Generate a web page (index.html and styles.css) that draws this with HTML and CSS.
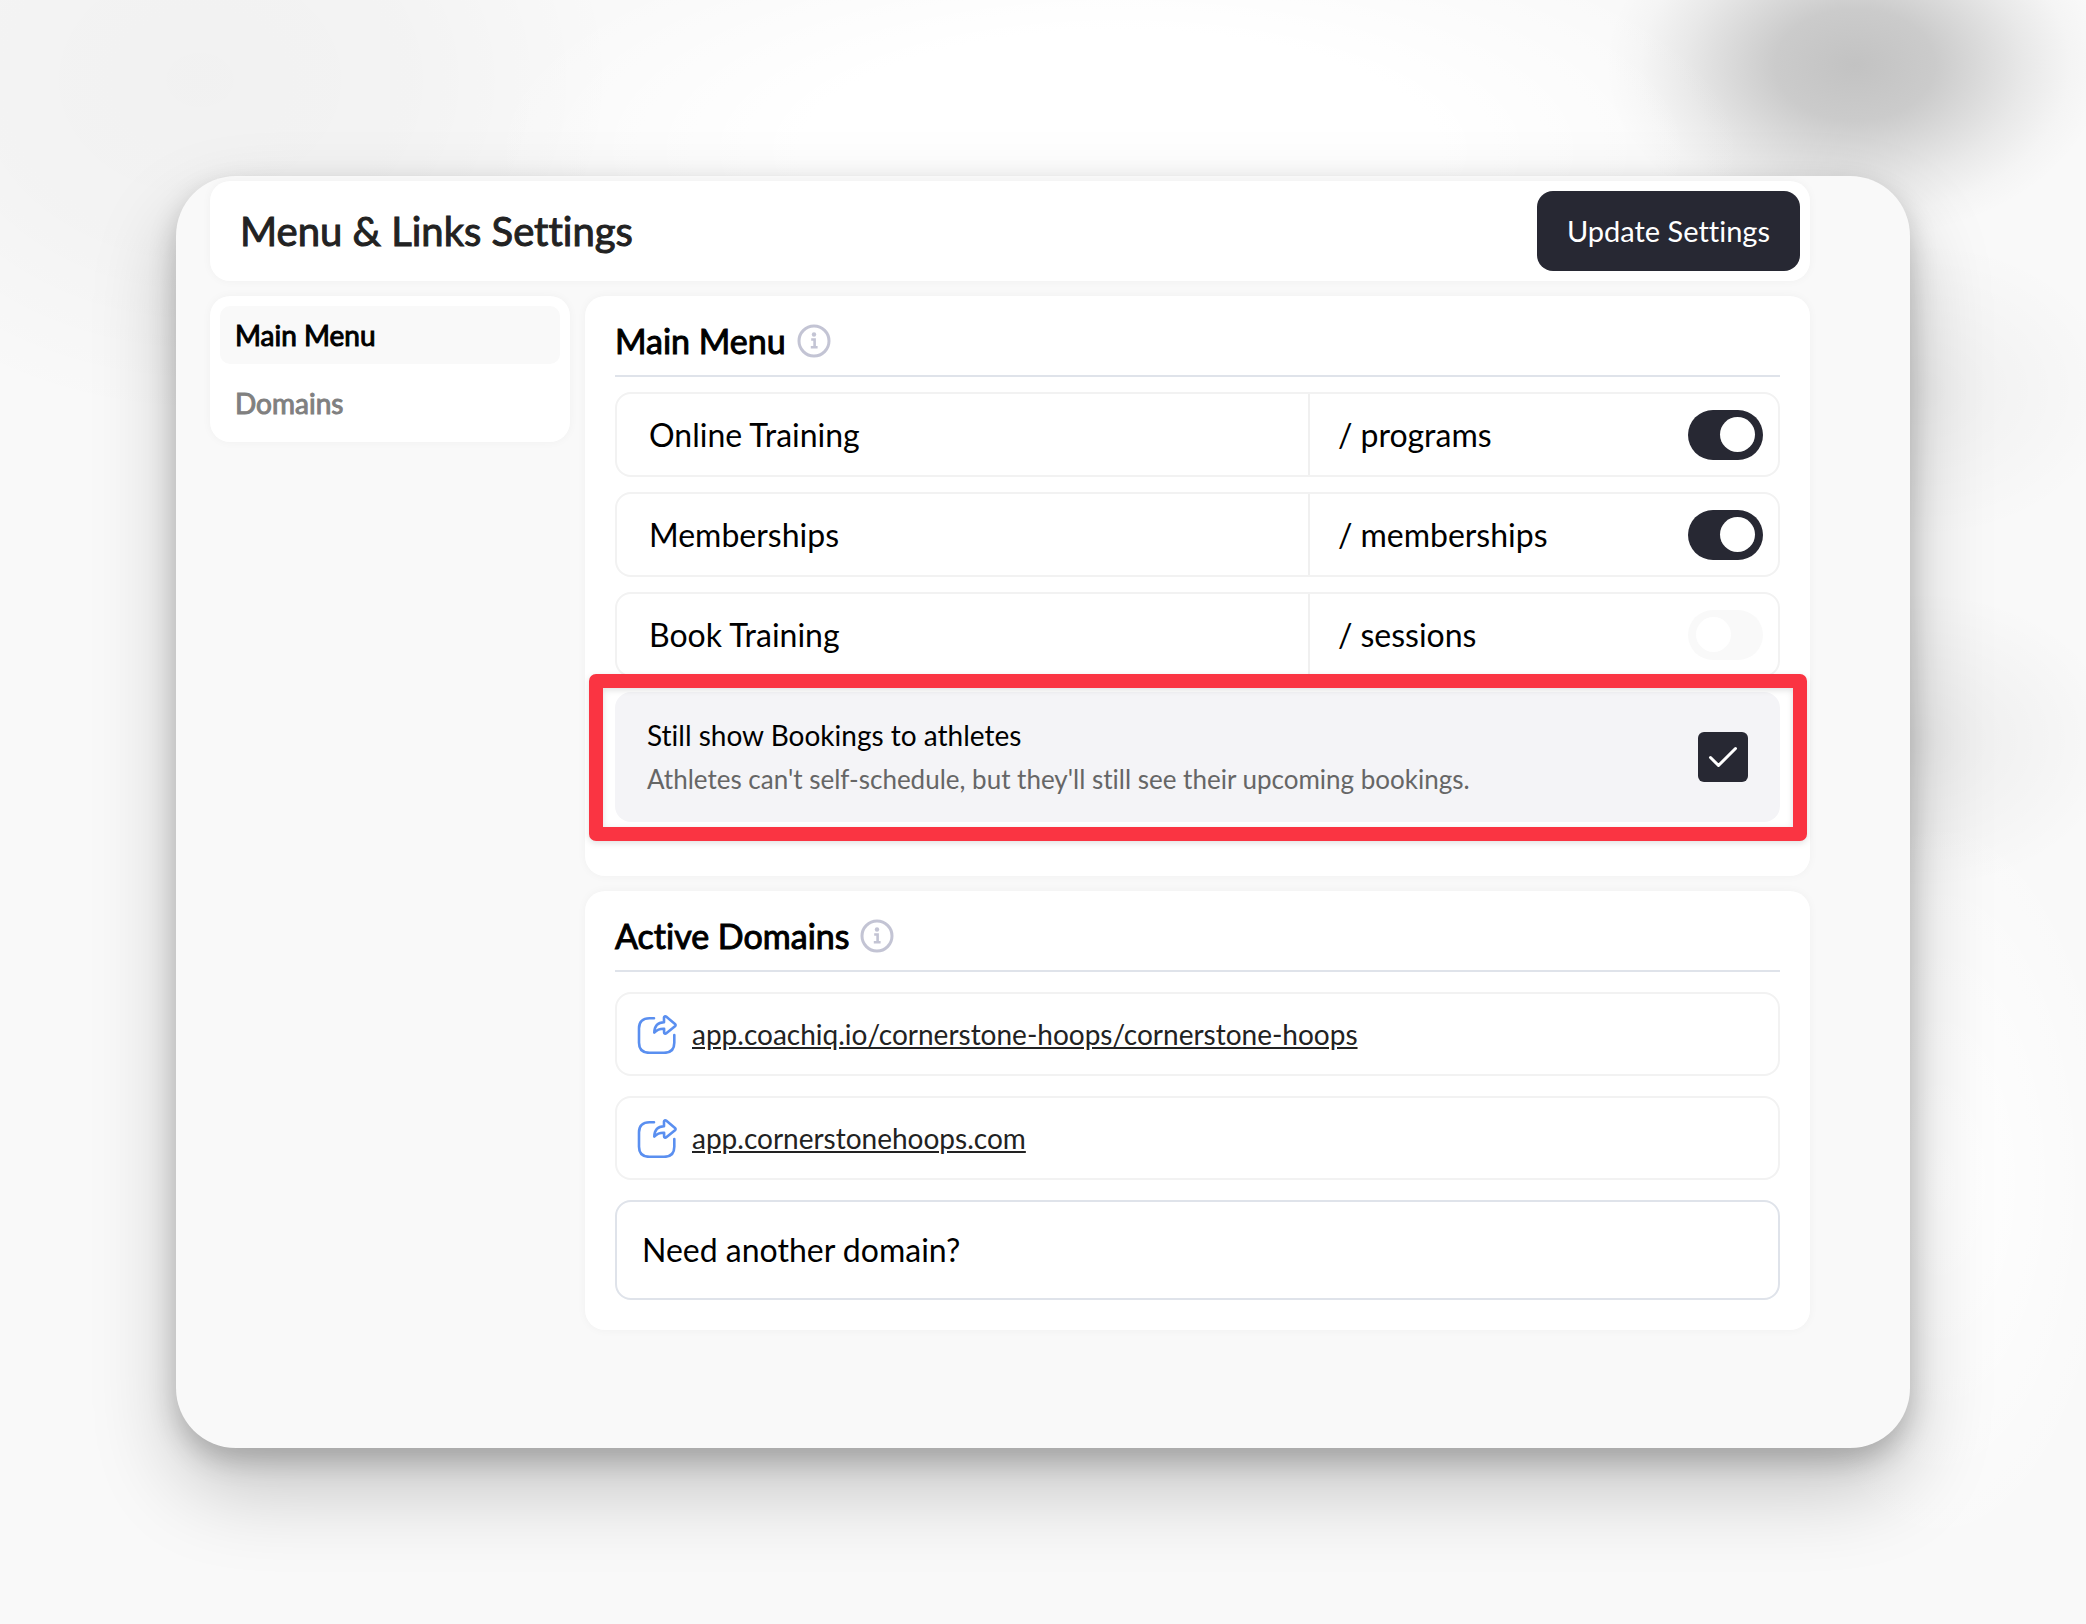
FILE: index.html
```html
<!DOCTYPE html>
<html lang="en">
<head>
<meta charset="utf-8">
<title>Menu &amp; Links Settings</title>
<link rel="stylesheet" href="styles.css">
</head>
<body>
<svg class="sprite" aria-hidden="true">
  <symbol id="info" viewBox="0 0 34 34">
    <circle cx="17" cy="17" r="15" fill="none" stroke="currentColor" stroke-width="3"/>
    <circle cx="17" cy="10.500" r="2.200" fill="currentColor"/>
    <path d="M14.200 15.500h3.400v7M13.800 23.200h6.800" fill="none" stroke="currentColor" stroke-width="2.600"/>
  </symbol>
  <symbol id="share" viewBox="0 0 40 40">
    <g fill="none" stroke="currentColor" stroke-width="2.600" stroke-linecap="round" stroke-linejoin="round">
      <path d="M17 4.300h-4.500C5.500 4.300 2 7.800 2 14.300v14.500c0 6.500 3.500 10 10.500 10h14.500c7 0 10.300-3.500 10.300-10V21"/>
      <path d="M17.300 18.500C17.500 11.500 21 8.500 27 8.300V3.600c0-1.200 1.200-1.700 2.100-1L38 9.900c.8.700.8 1.600 0 2.300l-8.700 7.100c-1 .8-2.200.3-2.200-.9v-3.600c-4-.2-6.800.8-9.800 3.700z"/>
    </g>
  </symbol>
</svg>
<div class="window">
  <header class="topbar">
    <h1 class="topbar-title">Menu &amp; Links Settings</h1>
    <button class="update" type="button">Update Settings</button>
  </header>
  <div class="columns">
    <nav class="sidebar">
      <a class="tab tab-active" href="#main-menu">Main Menu</a>
      <a class="tab" href="#domains">Domains</a>
    </nav>
    <main class="content">
      <section class="card card-menu" id="main-menu">
        <div class="card-head">
          <h2 class="card-title">Main Menu</h2>
          <svg class="info" aria-hidden="true"><use href="#info"/></svg>
        </div>
        <div class="row">
          <label class="row-name" for="programs">Online Training</label>
          <div class="row-path"><span>/</span><span>programs</span><input class="toggle" id="programs" type="checkbox" checked></div>
        </div>
        <div class="row">
          <label class="row-name" for="memberships">Memberships</label>
          <div class="row-path"><span>/</span><span>memberships</span><input class="toggle" id="memberships" type="checkbox" checked></div>
        </div>
        <div class="row">
          <label class="row-name" for="sessions">Book Training</label>
          <div class="row-path"><span>/</span><span>sessions</span><input class="toggle" id="sessions" type="checkbox"></div>
        </div>
        <div class="option">
          <label class="option-text" for="bookings">
            <span class="option-title">Still show Bookings to athletes</span>
            <span class="option-note">Athletes can't self-schedule, but they'll still see their upcoming bookings.</span>
          </label>
          <span class="check">
            <input class="check-box" id="bookings" type="checkbox" checked>
            <svg class="check-mark" viewBox="0 0 50 50" aria-hidden="true"><path d="M12.500 25.500l8 8 17-17" fill="none" stroke="#fff" stroke-width="3" stroke-linecap="round" stroke-linejoin="round"/></svg>
          </span>
        </div>
      </section>
      <section class="card card-domains" id="domains">
        <div class="card-head">
          <h2 class="card-title">Active Domains</h2>
          <svg class="info" aria-hidden="true"><use href="#info"/></svg>
        </div>
        <div class="domain-list">
          <div class="domain">
            <svg class="share" aria-hidden="true"><use href="#share"/></svg>
            <a class="domain-link" href="#d1">app.coachiq.io/cornerstone-hoops/cornerstone-hoops</a>
          </div>
          <div class="domain">
            <svg class="share" aria-hidden="true"><use href="#share"/></svg>
            <a class="domain-link" href="#d2">app.cornerstonehoops.com</a>
          </div>
          <button class="more" type="button">Need another domain?</button>
        </div>
      </section>
    </main>
  </div>
</div>
</body>
</html>
```
FILE: styles.css
```css
* { box-sizing: border-box; }

body {
  margin: 0;
  min-height: 100vh;
  display: flex;
  padding: 176px;
  font-family: Lato, "Liberation Sans", sans-serif;
  font-size: 32px;
  line-height: 40px;
  font-variant-ligatures: none;
  color: #000;
  background:
    radial-gradient(250px 175px at 1855px 65px, rgba(20, 20, 20, .24), rgba(20, 20, 20, .2) 32%, rgba(20, 20, 20, .07) 68%, rgba(20, 20, 20, .02) 86%, transparent),
    radial-gradient(200px 150px at 1920px 390px, rgba(0, 0, 0, .04), transparent),
    radial-gradient(200px 150px at 1920px 740px, rgba(0, 0, 0, .05), transparent),
    radial-gradient(180px 380px at 1940px 1180px, #fff, transparent),
    radial-gradient(420px 340px at 200px 80px, rgba(0, 0, 0, .03), rgba(0, 0, 0, .025) 50%, transparent),
    radial-gradient(640px 240px at 1120px 150px, #fff, #fff 50%, transparent),
    #f9f9f9;
}

h1, h2 { margin: 0; font-weight: 400; }
button, input { font: inherit; }
.sprite { display: none; }

.window {
  flex: 1;
  padding: 5px 100px 0 34px;
  border-radius: 60px;
  background: #f9f9f9;
  box-shadow: 0 40px 84px rgba(0, 0, 0, .22), 0 12px 28px rgba(0, 0, 0, .2);
}

.topbar, .sidebar, .card {
  background: #fff;
  border-radius: 20px;
  box-shadow: 0 0 10px rgba(0, 0, 0, .04);
}

.topbar {
  display: flex;
  align-items: center;
  justify-content: space-between;
  padding: 10px 10px 10px 30px;
}

.topbar-title {
  font-size: 40px;
  color: #222;
  -webkit-text-stroke: 1px;
}

.update {
  height: 80px;
  padding: 0 30px;
  border: 0;
  border-radius: 16px;
  background: #272833;
  color: #fff;
  font-size: 29px;
}

.columns {
  display: grid;
  grid-template-columns: 360px 1fr;
  align-items: start;
  gap: 15px;
  margin-top: 15px;
}

.sidebar, .content { display: grid; }
.sidebar { gap: 10px; padding: 10px; }
.content { gap: 15px; }

.tab {
  padding: 9px 15px;
  border-radius: 10px;
  color: #808080;
  font-size: 28px;
  text-decoration: none;
  -webkit-text-stroke: 1px;
}

.tab-active { background: #f9f9f9; color: #000; }

.card { padding: 0 30px 30px; }

.card-menu {
  display: grid;
  gap: 15px;
  padding-bottom: 54px;
}

.card-head {
  display: flex;
  align-items: center;
  gap: 11px;
  height: 81px;
  padding-top: 10px;
  border-bottom: 2px solid #dfe3ea;
}

.card-title { font-size: 34px; -webkit-text-stroke: 1px; }
.info { width: 34px; height: 34px; color: #c3c4d4; }

.row {
  display: grid;
  grid-template-columns: 691px 1fr;
  height: 85px;
  border: 2px solid #f2f2f2;
  border-radius: 16px;
}

.row-name { align-self: center; padding-left: 32px; }

.row-path {
  display: flex;
  align-items: center;
  gap: 8px;
  padding: 0 15px 0 28px;
  border-left: 2px solid #f0f0f0;
}

.toggle {
  appearance: none;
  display: flex;
  align-items: center;
  width: 75px;
  height: 50px;
  margin: 0 0 0 auto;
  padding: 0 8px;
  border-radius: 25px;
  background: #f9f9f9;
}

.toggle::before {
  content: "";
  width: 35px;
  height: 35px;
  border-radius: 50%;
  background: #fff;
}

.toggle:checked { justify-content: flex-end; background: #272833; }

.option {
  position: relative;
  display: flex;
  align-items: center;
  justify-content: space-between;
  height: 130px;
  padding: 0 32px;
  border-radius: 16px;
  background: #f4f4f7;
}

/* Red frame drawn over the option and the edge of the row above it */
.option::after {
  content: "";
  position: absolute;
  inset: -18px -27px -19px -26px;
  border: 14px solid #fa3442;
  border-radius: 7px;
  filter: drop-shadow(0 2px 3px rgba(0, 0, 0, .12));
  pointer-events: none;
}

.option-text { display: grid; gap: 4px; }
.option-title { font-size: 28px; }
.option-note { font-size: 26px; color: #666; }

.check { position: relative; display: flex; }

.check-box {
  appearance: none;
  width: 50px;
  height: 50px;
  margin: 0;
  border-radius: 6px;
  background: #272833;
}

.check-mark { position: absolute; inset: 0; pointer-events: none; }

.domain-list { display: grid; gap: 20px; padding-top: 20px; }

.domain {
  display: flex;
  align-items: center;
  gap: 15px;
  height: 84px;
  padding: 0 20px;
  border: 2px solid #f2f2f2;
  border-radius: 16px;
}

.share { width: 40px; height: 40px; color: #5a8ff0; }
.domain-link { color: #222; font-size: 28px; }

.more {
  height: 100px;
  padding: 0 25px;
  border: 2px solid #dfe3ea;
  border-radius: 16px;
  background: #fff;
  color: #000;
  text-align: left;
}
```
